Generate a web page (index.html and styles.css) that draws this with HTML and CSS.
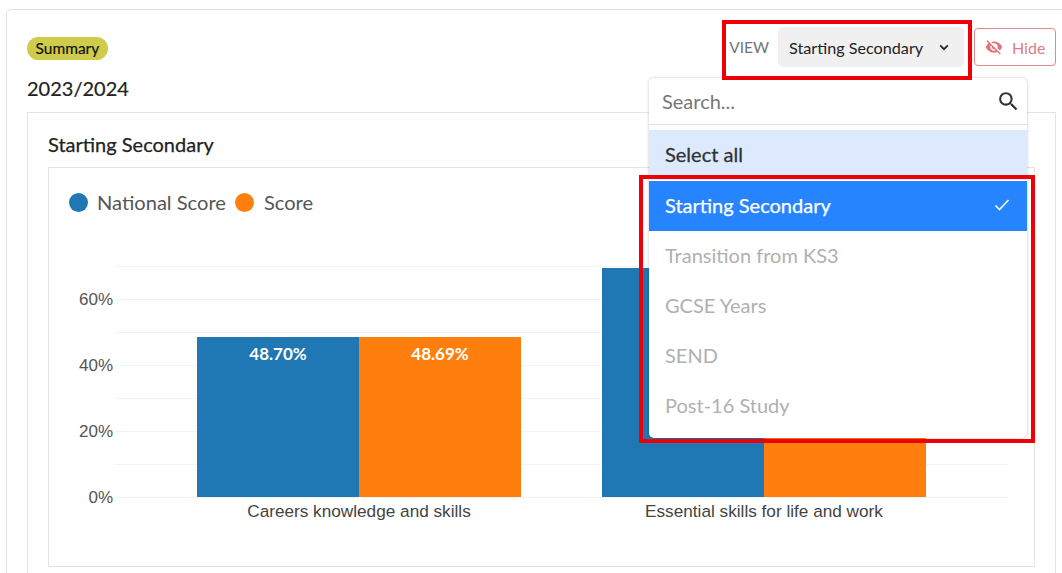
FILE: index.html
```html
<!DOCTYPE html>
<html lang="en">
<head>
<meta charset="utf-8">
<title>Summary</title>
<link rel="stylesheet" href="styles.css">
</head>
<body>
<div class="page">
  <section class="outer">
    <header class="head">
      <div class="head-left">
        <span class="badge">Summary</span>
        <h2 class="year">2023/2024</h2>
      </div>
      <div class="head-right">
        <span class="view-label">VIEW</span>
        <button class="select">Starting Secondary
          <svg class="chev" width="10" height="7" viewBox="0 0 10 7"><path d="M1.2 1.4 5 5.2l3.8-3.8" fill="none" stroke="#222" stroke-width="1.7"/></svg>
        </button>
        <button class="hide">
          <svg width="20" height="18" viewBox="0 0 24 24"><path fill="#e0737b" d="M12 7c2.76 0 5 2.24 5 5 0 .65-.13 1.26-.36 1.83l2.92 2.92c1.51-1.26 2.7-2.89 3.43-4.75C21.27 7.61 17 4.5 12 4.5c-1.4 0-2.74.25-3.98.7l2.16 2.16C10.74 7.13 11.35 7 12 7zM2 4.27l2.28 2.28.46.46C3.08 8.3 1.78 10.02 1 12c1.73 4.39 6 7.5 11 7.5 1.55 0 3.03-.3 4.38-.84l.42.42L19.73 22 21 20.73 3.27 3 2 4.27zM7.53 9.8l1.55 1.55c-.05.21-.08.43-.08.65 0 1.66 1.34 3 3 3 .22 0 .44-.03.65-.08l1.55 1.55c-.67.33-1.41.53-2.2.53-2.76 0-5-2.24-5-5 0-.79.2-1.53.53-2.2z"/></svg>
          Hide
        </button>
      </div>
    </header>
    <section class="inner">
      <h3 class="inner-title">Starting Secondary</h3>
      <div class="chart-box">
        <div class="legend">
          <span class="dot dot-blue"></span><span class="legend-text">National Score</span>
          <span class="dot dot-orange"></span><span class="legend-text">Score</span>
        </div>
        <svg class="chart" width="984" height="340" viewBox="49 230 984 340">
          <g class="grid">
            <line x1="115" x2="1008" y1="266.5" y2="266.5"/>
            <line x1="115" x2="1008" y1="299.5" y2="299.5"/>
            <line x1="115" x2="1008" y1="332.5" y2="332.5"/>
            <line x1="115" x2="1008" y1="365.5" y2="365.5"/>
            <line x1="115" x2="1008" y1="398.5" y2="398.5"/>
            <line x1="115" x2="1008" y1="431.5" y2="431.5"/>
            <line x1="115" x2="1008" y1="464.5" y2="464.5"/>
            <line x1="115" x2="1008" y1="497.5" y2="497.5"/>
          </g>
          <g class="ticks">
            <text x="113" y="305">60%</text>
            <text x="113" y="371">40%</text>
            <text x="113" y="437">20%</text>
            <text x="113" y="503">0%</text>
          </g>
          <rect x="197" y="337" width="162" height="160" fill="#1f77b4"/>
          <rect x="359" y="337" width="162" height="160" fill="#ff7f0e"/>
          <rect x="602" y="268" width="162" height="229" fill="#1f77b4"/>
          <rect x="764" y="268" width="162" height="229" fill="#ff7f0e"/>
          <text class="val" x="278" y="360">48.70%</text>
          <text class="val" x="440" y="360">48.69%</text>
          <text class="cat" x="359" y="517">Careers knowledge and skills</text>
          <text class="cat" x="764" y="517">Essential skills for life and work</text>
        </svg>
      </div>
    </section>
  </section>

  <div class="dropdown">
    <div class="search">
      <span class="search-text">Search...</span>
      <svg width="25" height="25" viewBox="0 0 24 24"><path fill="#333" d="M15.5 14h-.79l-.28-.27A6.47 6.47 0 0 0 16 9.5 6.5 6.5 0 1 0 9.5 16c1.61 0 3.09-.59 4.23-1.57l.27.28v.79l5 4.99L20.49 19l-4.99-5zm-6 0C7.01 14 5 11.99 5 9.5S7.01 5 9.5 5 14 7.01 14 9.5 11.99 14 9.5 14z"/></svg>
    </div>
    <div class="opt opt-all">Select all</div>
    <div class="opt opt-sel">Starting Secondary
      <svg width="16" height="14" viewBox="0 0 16 14"><path d="M1.5 7.5 5.5 11.5 14.5 2" fill="none" stroke="#fff" stroke-width="1.6"/></svg>
    </div>
    <div class="opt">Transition from KS3</div>
    <div class="opt">GCSE Years</div>
    <div class="opt">SEND</div>
    <div class="opt">Post-16 Study</div>
  </div>

  <div class="mark mark-view"></div>
  <div class="mark mark-list"></div>
</div>
</body>
</html>
```
FILE: styles.css
```css
* { box-sizing: border-box; }
html, body { margin: 0; padding: 0; background: #fff; overflow: hidden; }
body { font-family: Lato, "Open Sans", sans-serif; color: #212529; }
.page { position: relative; width: 1062px; height: 573px; overflow: hidden; padding: 9px 0 0 6px; }

.outer {
  width: 1071px;
  height: 620px;
  border: 1px solid #e3e3e3;
  border-radius: 5px;
  padding: 27px 20px 0;
}
.head { display: flex; justify-content: space-between; width: 1029px; height: 75px; }
.head-left { display: flex; flex-direction: column; align-items: flex-start; }
.badge {
  background: #cfcb4b;
  color: #111;
  font-size: 15.5px;
  font-weight: 400;
  height: 23px;
  line-height: 22px;
  padding: 0 8.5px;
  border-radius: 12px;
  -webkit-text-stroke: 0.2px #111;
}
.year { margin: 16px 0 0; font-size: 20px; font-weight: 400; line-height: 24px; color: #222; -webkit-text-stroke: 0.2px #222; }

.head-right { display: flex; align-items: center; height: 40px; margin-top: -10px; }
.view-label { font-size: 15.5px; color: #6c757d; margin-right: 9px; }
.select {
  display: flex; align-items: center; justify-content: space-between;
  width: 186px; height: 40px; padding: 0 15px 0 11px;
  background: #f0f0f0; border: 0; border-radius: 5px;
  font: 16.2px Lato, sans-serif; color: #222;
  margin-right: 10px;
}
.hide {
  display: flex; align-items: center; gap: 8px;
  width: 82px; height: 38px; padding: 0 0 0 9px;
  background: #fff; border: 1px solid #e2888f; border-radius: 4px;
  font: 16px Lato, sans-serif; color: #e07d84;
}

.inner { width: 1029px; height: 500px; border: 1px solid #e3e3e3; padding: 19px 20px 0; }
.inner-title { margin: 0 0 10px; font-size: 20px; line-height: 25px; font-weight: 400; color: #222; -webkit-text-stroke: 0.25px #222; }
.chart-box { width: 987px; height: 400px; border: 1px solid #e3e3e3; padding: 24px 0 0 20px; position: relative; }
.legend { display: flex; align-items: center; height: 20px; }
.dot { width: 19px; height: 19px; border-radius: 50%; margin-right: 9px; }
.dot-blue { background: #1f77b4; }
.dot-orange { background: #ff7f0e; margin-right: 10px; }
.legend-text { font-size: 20.1px; color: #555; margin-right: 9px; }
.chart { position: absolute; left: 0; top: 62px; display: block; }

.grid line { stroke: #f3f3f3; stroke-width: 1; }
.ticks text { font: 17px "Liberation Sans", sans-serif; fill: #555; text-anchor: end; }
.val { font: 700 17px Lato, sans-serif; fill: #fff; text-anchor: middle; }
.cat { font: 17.2px "Liberation Sans", sans-serif; fill: #444; text-anchor: middle; }

.dropdown {
  position: absolute; left: 649px; top: 78px; width: 377.5px; height: 360px;
  background: #fff; border-radius: 5px;
  box-shadow: 0 0 3px rgba(0,0,0,.25);
}
.search {
  display: flex; align-items: center; justify-content: space-between;
  height: 47px; padding: 0 6px 0 13px;
  border-bottom: 1px solid #e0e0e0;
  margin-bottom: 5px;
}
.search-text { font-size: 20px; color: #777; }
.opt {
  display: flex; align-items: center; justify-content: space-between;
  height: 50px; padding: 0 16px 2px;
  font-size: 20px; color: #b0b0b0;
}
.opt-all { background: #dde9fc; color: #333; -webkit-text-stroke: 0.3px #333; margin-bottom: 1px; }
.opt-sel { background: #2684ff; color: #fff; -webkit-text-stroke: 0.25px #fff; padding-right: 17px; }

.mark { position: absolute; border: 4px solid #ee0008; pointer-events: none; }
.mark-view { left: 722px; top: 20px; width: 250px; height: 60px; }
.mark-list { left: 639px; top: 175px; width: 396px; height: 268px; border-width: 4.5px; }
```
